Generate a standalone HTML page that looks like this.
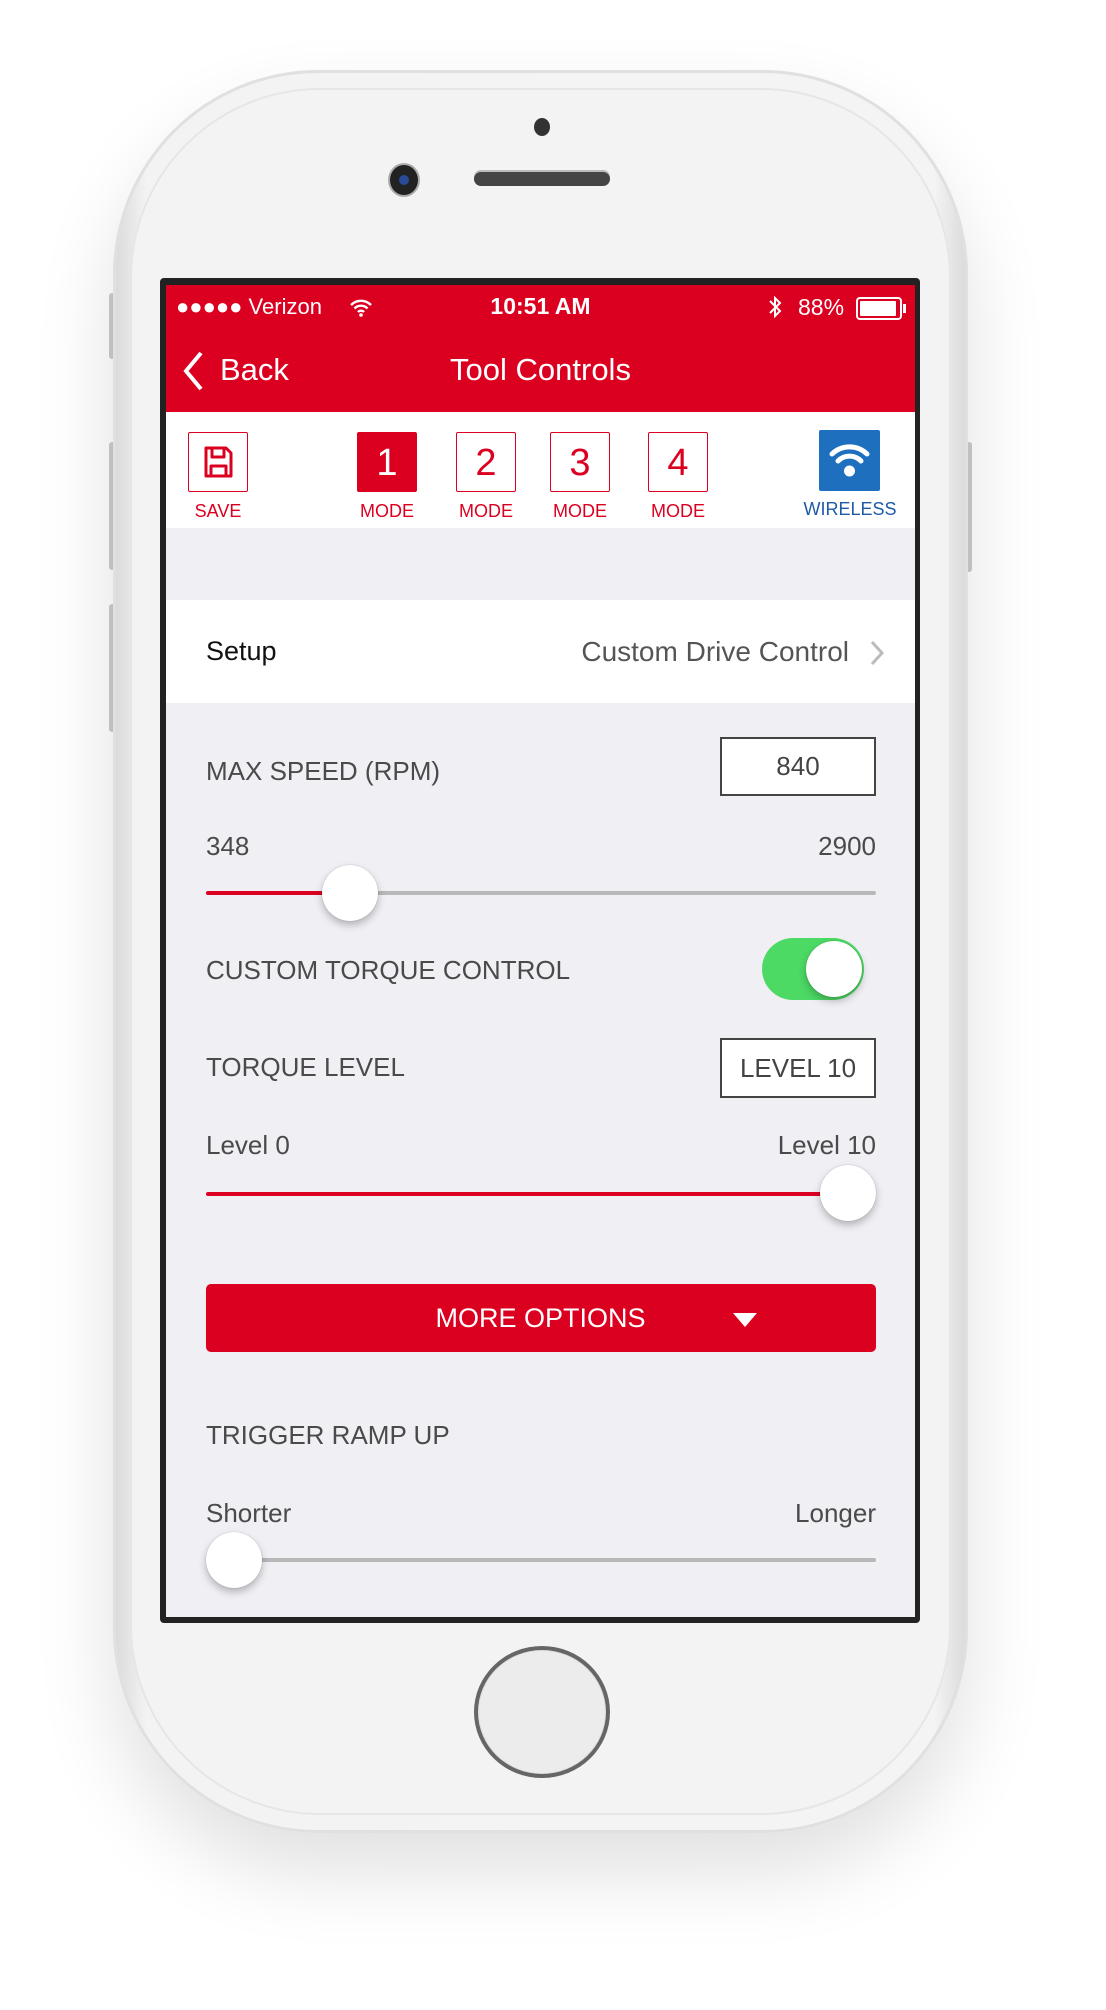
<!DOCTYPE html>
<html><head><meta charset="utf-8">
<style>
*{margin:0;padding:0;box-sizing:border-box}
body{width:1106px;height:2010px;background:#fff;position:relative;overflow:hidden;font-family:"Liberation Sans",Arial,sans-serif}
.a{position:absolute}
.phone{left:113px;top:70px;width:855px;height:1763px;border-radius:205px;background:linear-gradient(90deg,#d9d9d9,#f3f3f3 4%,#f4f4f4 96%,#d9d9d9);box-shadow:0 40px 80px rgba(0,0,0,.12),inset 0 0 0 3px #e0e0e0}
.inner{left:130px;top:88px;width:821px;height:1727px;border-radius:190px;background:#f3f3f3;border:2px solid #e6e6e6}
.frame{left:160px;top:278px;width:760px;height:1345px;background:#222;border-radius:4px}
.scr{left:166px;top:285px;width:749px;height:1332px;background:#efeff4;overflow:hidden}
.red{left:0;top:0;width:749px;height:127px;background:#dc0020;color:#fff}
.t{white-space:nowrap}
.lbl{color:#4a4a4a;font-size:26px}
.box{border:2px solid #444;background:#fff;color:#444;font-size:26px;text-align:center}
.mb{width:60px;height:60px;border:1.5px solid #dc0020;border-radius:2px;color:#dc0020;font-size:38px;text-align:center;line-height:60px;background:#fff}
.ml{color:#dc0020;font-size:18px;text-align:center;width:90px}
.thumb{width:56px;height:56px;border-radius:50%;background:#fff;box-shadow:0 4px 8px rgba(0,0,0,.25),0 0 1px rgba(0,0,0,.3)}
.track{height:4px;background:#b8b8b8;border-radius:2px}
</style></head><body>
<div class="a" style="left:109px;top:293px;width:6px;height:66px;background:#ccc;border-radius:3px"></div>
<div class="a" style="left:109px;top:442px;width:6px;height:128px;background:#ccc;border-radius:3px"></div>
<div class="a" style="left:109px;top:604px;width:6px;height:128px;background:#ccc;border-radius:3px"></div>
<div class="a" style="left:966px;top:442px;width:6px;height:130px;background:#ccc;border-radius:3px"></div>
<div class="a phone"></div>
<div class="a inner"></div>
<div class="a" style="left:534px;top:118px;width:16px;height:18px;border-radius:50%;background:#333"></div>
<div class="a" style="left:390px;top:165px;width:28px;height:30px;border-radius:50%;background:#222;box-shadow:0 0 0 2px #aaa"><div class="a" style="left:9px;top:10px;width:10px;height:10px;border-radius:50%;background:#2a4a9a"></div></div>
<div class="a" style="left:474px;top:172px;width:136px;height:14px;border-radius:7px;background:#444;box-shadow:0 -2px 0 #bbb"></div>
<div class="a" style="left:474px;top:1646px;width:136px;height:132px;border-radius:50%;border:4px solid #666;background:#ececec;box-shadow:inset 0 0 0 1px #ddd"></div>
<div class="a frame"></div>
<div class="a scr">
 <div class="a red">
  <div class="a t" style="left:10px;top:9px;font-size:22px">●●●●● Verizon</div>
  <svg class="a" style="left:184px;top:14px" width="22" height="18" viewBox="0 0 22 18"><path d="M1 6a14 14 0 0 1 20 0M4.5 9.5a9 9 0 0 1 13 0M8 13a4 4 0 0 1 6 0" stroke="#fff" stroke-width="2.4" fill="none"/><circle cx="11" cy="16" r="1.8" fill="#fff"/></svg>
  <div class="a t" style="left:0;width:749px;text-align:center;top:8px;font-size:23px;font-weight:bold">10:51 AM</div>
  <svg class="a" style="left:602px;top:9px" width="14" height="26" viewBox="0 0 14 26"><path d="M2 7l10 10-5 5V4l5 5L2 19" stroke="#fff" stroke-width="2" fill="none"/></svg>
  <div class="a t" style="left:632px;top:9px;font-size:23px">88%</div>
  <div class="a" style="left:690px;top:12px;width:46px;height:23px;border:2px solid #fff;border-radius:4px;padding:2px"><div style="width:36px;height:15px;background:#fff;border-radius:1px"></div></div>
  <div class="a" style="left:737px;top:19px;width:3px;height:9px;background:#fff"></div>
  <svg class="a" style="left:16px;top:66px" width="22" height="40" viewBox="0 0 22 40"><path d="M19 2L4 20l15 18" stroke="#fff" stroke-width="4" fill="none"/></svg>
  <div class="a t" style="left:54px;top:67px;font-size:31px">Back</div>
  <div class="a t" style="left:0;width:749px;text-align:center;top:67px;font-size:31px">Tool Controls</div>
 </div>
 <div class="a" style="left:0;top:127px;width:749px;height:116px;background:#fff"></div>
 <div class="a mb" style="left:22px;top:147px"><svg width="34" height="36" viewBox="0 0 34 36" style="margin-top:11px"><path d="M5 4h20l5 5v23H5z M11 4v9h12V4 M10 32v-10h15v10" stroke="#dc0020" stroke-width="3" fill="none" stroke-linejoin="round"/></svg></div>
 <div class="a ml" style="left:7px;top:216px">SAVE</div>
 <div class="a mb" style="left:191px;top:147px;background:#dc0020;color:#fff">1</div>
 <div class="a ml" style="left:176px;top:216px">MODE</div>
 <div class="a mb" style="left:290px;top:147px">2</div>
 <div class="a ml" style="left:275px;top:216px">MODE</div>
 <div class="a mb" style="left:384px;top:147px">3</div>
 <div class="a ml" style="left:369px;top:216px">MODE</div>
 <div class="a mb" style="left:482px;top:147px">4</div>
 <div class="a ml" style="left:467px;top:216px">MODE</div>
 <div class="a" style="left:653px;top:145px;width:61px;height:61px;background:#1e70bf;border-radius:2px"><svg width="61" height="61" viewBox="0 0 61 61"><path d="M13 24a25 25 0 0 1 35 0M19 31a16 16 0 0 1 23 0" stroke="#fff" stroke-width="5" fill="none" stroke-linecap="round"/><circle cx="30.5" cy="41" r="5.5" fill="#fff"/></svg></div>
 <div class="a t" style="left:624px;top:214px;width:120px;text-align:center;color:#1e5aa8;font-size:18px">WIRELESS</div>
 <div class="a" style="left:0;top:315px;width:749px;height:103px;background:#fff"></div>
 <div class="a t" style="left:40px;top:351px;font-size:27px;color:#111">Setup</div>
 <div class="a t" style="left:0;width:683px;text-align:right;top:351px;font-size:28px;color:#555">Custom Drive Control</div>
 <svg class="a" style="left:703px;top:354px" width="16" height="28" viewBox="0 0 16 28"><path d="M3 3l10 11L3 25" stroke="#bbb" stroke-width="3" fill="none"/></svg>
 <div class="a t lbl" style="left:40px;top:471px">MAX SPEED (RPM)</div>
 <div class="a box" style="left:554px;top:452px;width:156px;height:59px;line-height:55px">840</div>
 <div class="a t lbl" style="left:40px;top:546px">348</div>
 <div class="a t lbl" style="left:0;width:710px;text-align:right;top:546px">2900</div>
 <div class="a track" style="left:40px;top:606px;width:670px"></div>
 <div class="a" style="left:40px;top:606px;width:145px;height:4px;background:#dc0020;border-radius:2px"></div>
 <div class="a thumb" style="left:156px;top:580px"></div>
 <div class="a t lbl" style="left:40px;top:670px">CUSTOM TORQUE CONTROL</div>
 <div class="a" style="left:596px;top:653px;width:102px;height:62px;border-radius:31px;background:#4cd964"></div>
 <div class="a thumb" style="left:640px;top:656px"></div>
 <div class="a t lbl" style="left:40px;top:767px">TORQUE LEVEL</div>
 <div class="a box" style="left:554px;top:753px;width:156px;height:60px;line-height:56px">LEVEL 10</div>
 <div class="a t lbl" style="left:40px;top:845px">Level 0</div>
 <div class="a t lbl" style="left:0;width:710px;text-align:right;top:845px">Level 10</div>
 <div class="a" style="left:40px;top:907px;width:650px;height:4px;background:#dc0020;border-radius:2px"></div>
 <div class="a thumb" style="left:654px;top:880px"></div>
 <div class="a" style="left:40px;top:999px;width:670px;height:68px;background:#dc0020;border-radius:5px"></div>
 <div class="a t" style="left:0;width:749px;text-align:center;top:1018px;color:#fff;font-size:27px">MORE OPTIONS</div>
 <svg class="a" style="left:566px;top:1027px" width="26" height="16" viewBox="0 0 26 16"><path d="M1 1h24L13 15z" fill="#fff"/></svg>
 <div class="a t lbl" style="left:40px;top:1135px">TRIGGER RAMP UP</div>
 <div class="a t lbl" style="left:40px;top:1213px">Shorter</div>
 <div class="a t lbl" style="left:0;width:710px;text-align:right;top:1213px">Longer</div>
 <div class="a track" style="left:40px;top:1273px;width:670px"></div>
 <div class="a thumb" style="left:40px;top:1247px"></div>
</div>
</body></html>
